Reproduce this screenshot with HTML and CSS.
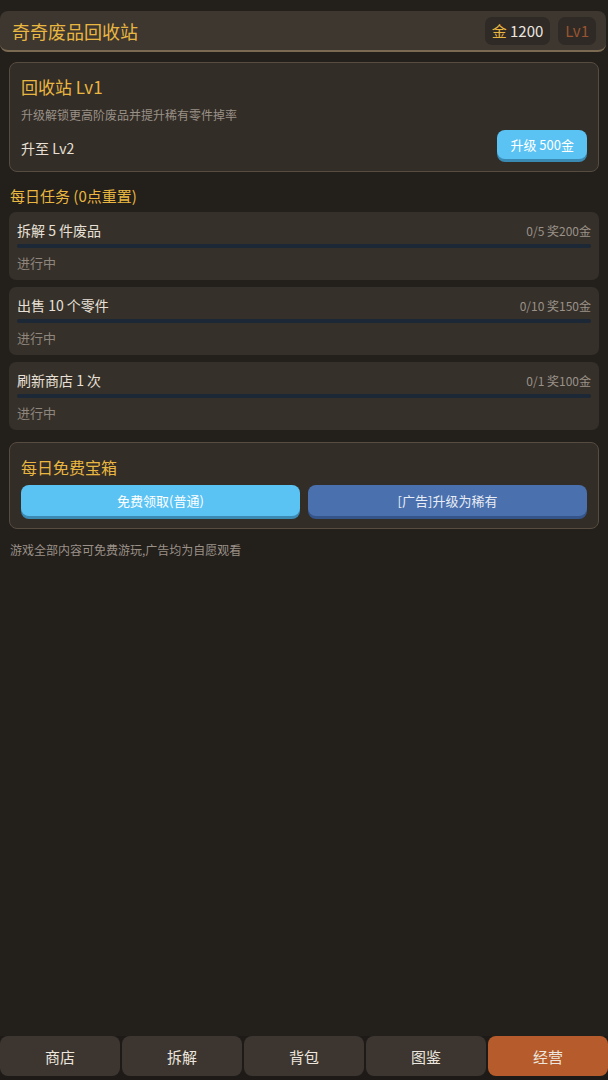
FILE: index.html
```html
<!DOCTYPE html>
<html lang="zh-CN">
<head>
    <meta charset="UTF-8">
    <meta name="viewport" content="width=device-width, initial-scale=1.0">
    <title>奇奇废品回收站</title>
    <link rel="stylesheet" href="styles.css">
</head>
<body>
    <div class="app">
        <div class="topbar">
            <div class="game-title">奇奇废品回收站</div>
            <div class="stats">
                <span class="gold-badge"><span class="gold-mark">金</span> 1200</span>
                <span class="level-badge">Lv1</span>
            </div>
        </div>

        <div class="main">
            <div class="card station">
                <div class="card-title">回收站 Lv1</div>
                <div class="card-desc">升级解锁更高阶废品并提升稀有零件掉率</div>
                <div class="upgrade-row">
                    <span class="next-level">升至 Lv2</span>
                    <button class="btn btn-sky btn-small">升级 500金</button>
                </div>
            </div>

            <div class="section-title">每日任务 (0点重置)</div>

            <div class="task">
                <div class="task-head">
                    <span class="task-name">拆解 5 件废品</span>
                    <span class="task-reward">0/5 奖200金</span>
                </div>
                <div class="progress"><div class="progress-fill" style="width: 0%"></div></div>
                <div class="task-state">进行中</div>
            </div>

            <div class="task">
                <div class="task-head">
                    <span class="task-name">出售 10 个零件</span>
                    <span class="task-reward">0/10 奖150金</span>
                </div>
                <div class="progress"><div class="progress-fill" style="width: 0%"></div></div>
                <div class="task-state">进行中</div>
            </div>

            <div class="task">
                <div class="task-head">
                    <span class="task-name">刷新商店 1 次</span>
                    <span class="task-reward">0/1 奖100金</span>
                </div>
                <div class="progress"><div class="progress-fill" style="width: 0%"></div></div>
                <div class="task-state">进行中</div>
            </div>

            <div class="card chest">
                <div class="card-title chest-title">每日免费宝箱</div>
                <div class="chest-buttons">
                    <button class="btn btn-sky">免费领取(普通)</button>
                    <button class="btn btn-blue">[广告]升级为稀有</button>
                </div>
            </div>

            <div class="note">游戏全部内容可免费游玩,广告均为自愿观看</div>
        </div>

        <div class="tabbar">
            <div class="tab">商店</div>
            <div class="tab">拆解</div>
            <div class="tab">背包</div>
            <div class="tab">图鉴</div>
            <div class="tab active">经营</div>
        </div>
    </div>
</body>
</html>
```

FILE: styles.css
```css
* {
    box-sizing: border-box;
}
body {
    margin: 0;
    background-color: #231f1b;
    font-family: "Noto Sans CJK SC", "Noto Sans", sans-serif;
    color: #e8e0d6;
}
.app {
    height: 1080px;
    display: flex;
    flex-direction: column;
    padding-top: 11px;
}
.topbar {
    display: flex;
    align-items: center;
    justify-content: space-between;
    height: 41px;
    margin: 0 2px 0 0;
    padding: 0 10px 0 12px;
    background-color: #3e3730;
    border-bottom: 2px solid #7a6a52;
    border-radius: 8px;
}
.game-title {
    font-size: 18px;
    color: #e9b741;
}
.stats {
    display: flex;
    gap: 8px;
}
.gold-badge, .level-badge {
    height: 28px;
    line-height: 28px;
    padding: 0 7px;
    border-radius: 7px;
    background-color: #2f2a25;
    font-size: 15px;
}
.gold-badge {
    color: #ebe6e0;
}
.gold-mark {
    color: #e9b741;
}
.level-badge {
    color: #9a5530;
}
.main {
    flex: 1;
    padding: 10px 9px 0 9px;
}
.card {
    background-color: #332d27;
    border: 1px solid #564c42;
    border-radius: 8px;
    padding: 12px 11px 12px 11px;
}
.card-title {
    font-size: 17px;
    line-height: 24px;
    color: #e9b741;
}
.card-desc {
    margin-top: 7px;
    font-size: 12px;
    line-height: 18px;
    color: #9a9188;
}
.upgrade-row {
    display: flex;
    justify-content: space-between;
    align-items: center;
    margin-top: 6px;
}
.next-level {
    font-size: 14px;
    padding-top: 6px;
}
.btn {
    border: none;
    border-radius: 8px;
    font-family: inherit;
    font-size: 13px;
    color: #ffffff;
    cursor: pointer;
}
.btn-small {
    height: 29px;
    padding: 0 13px;
}
.btn-sky {
    background-color: #5bc3f4;
    box-shadow: 0 3px 0 #3a8ab3;
}
.btn-blue {
    background-color: #4a71ae;
    box-shadow: 0 3px 0 #34548a;
    color: #e8ecf4;
}
.section-title {
    margin: 13px 0 5px 1px;
    font-size: 15px;
    line-height: 22px;
    color: #e9b741;
}
.task {
    background-color: #35302a;
    border-radius: 7px;
    padding: 7px 8px 7px 8px;
    margin-bottom: 7px;
}
.task-head {
    display: flex;
    justify-content: space-between;
    align-items: baseline;
}
.task-name {
    font-size: 14px;
    line-height: 22px;
}
.task-reward {
    font-size: 12px;
    color: #9a9188;
}
.progress {
    height: 4px;
    margin-top: 3px;
    border-radius: 2px;
    background-color: #1c2835;
}
.progress-fill {
    height: 100%;
    background-color: #5bc3f4;
}
.task-state {
    margin-top: 5px;
    font-size: 13px;
    line-height: 20px;
    color: #8f867d;
}
.chest {
    margin-top: 12px;
    padding: 12px 11px 12px 11px;
}
.chest-title {
    font-size: 16px;
}
.chest-buttons {
    display: grid;
    grid-template-columns: 1fr 1fr;
    gap: 8px;
    margin-top: 6px;
}
.chest-buttons .btn {
    height: 31px;
}
.note {
    margin: 12px 0 0 1px;
    font-size: 12px;
    color: #9a9188;
}
.tabbar {
    display: flex;
    gap: 2px;
    height: 44px;
    padding-bottom: 4px;
    background-color: #1d1a17;
}
.tab {
    flex: 1;
    display: flex;
    align-items: center;
    justify-content: center;
    background-color: #3d3630;
    border-radius: 8px;
    font-size: 15px;
    color: #ece6de;
}
.tab.active {
    background-color: #b65c2c;
}
```
